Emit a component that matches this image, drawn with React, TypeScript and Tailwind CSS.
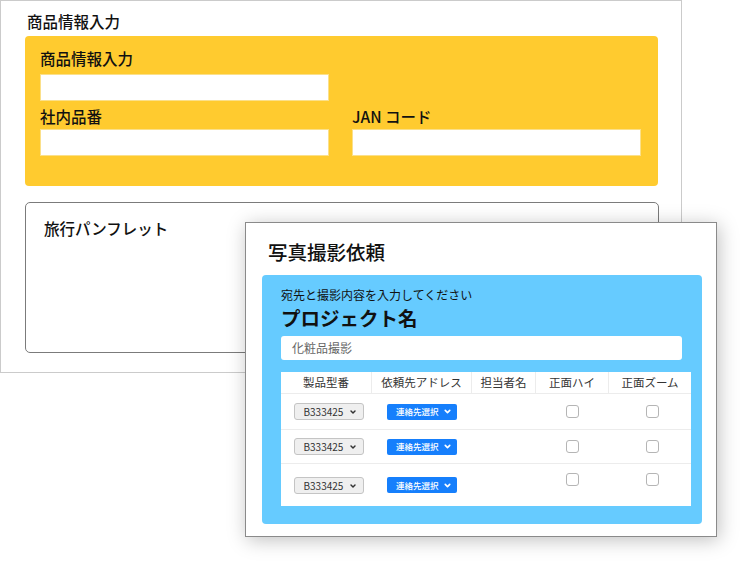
import React from "react";

const Chevron = ({ className }: { className?: string }) => (
  <svg viewBox="0 0 10 10" className={className} fill="none" stroke="currentColor" strokeWidth="1.8" strokeLinecap="round" strokeLinejoin="round">
    <path d="M2.5 3.8 L5 6.3 L7.5 3.8" />
  </svg>
);

const Select = () => (
  <div className="flex items-center justify-between w-[70px] h-[17px] rounded-[3px] border border-[#c4c4c4] bg-[#efefef] pl-[9px] pr-[6px] text-[10px] leading-none text-[#333]">
    <span>B333425</span>
    <Chevron className="w-[8px] h-[8px] text-[#333]" />
  </div>
);

const BlueBtn = () => (
  <div className="flex items-center justify-between w-[70px] h-[16px] rounded-[2px] bg-[#167ffc] pl-[9px] pr-[5px] text-[8.5px] leading-none text-white font-medium">
    <span>連絡先選択</span>
    <Chevron className="w-[9px] h-[9px] text-white" />
  </div>
);

const Check = () => (
  <div className="w-[13px] h-[13px] rounded-[3px] border border-[#b5b5b5] bg-white" />
);

const cols = "grid grid-cols-[91px_100px_64px_73px_82px]";

const Row = ({ h, top }: { h: string; top?: boolean }) => (
  <div className={`${cols} ${h} border-b border-[#ececec] last:border-b-0`}>
    <div className={`flex justify-center ${top ? "items-start pt-[13px]" : "items-center"}`}>
      <div className="ml-[4px]"><Select /></div>
    </div>
    <div className={`flex justify-center ${top ? "items-start pt-[13px]" : "items-center"}`}>
      <BlueBtn />
    </div>
    <div />
    <div className={`flex justify-center ${top ? "items-start pt-[9px]" : "items-center"}`}>
      <Check />
    </div>
    <div className={`flex justify-center ${top ? "items-start pt-[9px]" : "items-center"}`}>
      <div className="ml-[5px]"><Check /></div>
    </div>
  </div>
);

export default function App() {
  return (
    <div
      className="relative w-[743px] h-[564px] bg-white overflow-hidden text-[#111]"
      style={{ fontFamily: '"Noto Sans CJK JP", "Noto Sans", sans-serif' }}
    >
      {/* back window */}
      <div className="w-[682px] h-[373px] border border-[#cbcbcb] bg-white pl-[24px] pt-[9px]">
        <div className="pl-[2px] text-[15.5px] leading-[22px] font-medium">商品情報入力</div>
        <div className="mt-[4px] w-[633px] h-[150px] rounded-[4px] bg-[#ffcb2f] pl-[15px] pt-[11px]">
          <div className="grid grid-cols-[289px_289px] gap-x-[23px]">
            <div className="text-[15.5px] leading-[22px] font-medium">商品情報入力</div>
            <div />
            <div className="mt-[5px] h-[27px] bg-white border border-[#fbe08a]" />
            <div />
            <div className="mt-[4px] text-[15.5px] leading-[22px] font-medium">社内品番</div>
            <div className="mt-[4px] text-[15.5px] leading-[22px] font-medium">JAN コード</div>
            <div className="mt-[2px] h-[27px] bg-white border border-[#fbe08a]" />
            <div className="mt-[2px] h-[27px] bg-white border border-[#fbe08a]" />
          </div>
        </div>
        <div className="mt-[16px] w-[634px] h-[151px] rounded-[5px] border border-[#7b7b7b] pl-[18px] pt-[14px]">
          <div className="text-[15.5px] leading-[22px] font-medium">旅行パンフレット</div>
        </div>
      </div>

      {/* front window */}
      <div className="absolute left-[245px] top-[222px] w-[472px] h-[315px] bg-white border border-[#8a8a8a] shadow-[2px_3px_18px_rgba(0,0,0,0.25)] pt-[15px]">
        <div className="pl-[22px] text-[19.5px] leading-[28px] font-medium">写真撮影依頼</div>
        <div className="mt-[9px] ml-[16px] w-[440px] h-[249px] rounded-[4px] bg-[#66cbff] pl-[19px] pt-[12px]">
          <div className="text-[12px] leading-[16px]">宛先と撮影内容を入力してください</div>
          <div className="mt-[2px] text-[19.5px] leading-[26px] font-bold">プロジェクト名</div>
          <div className="mt-[5px] w-[401px] h-[24px] rounded-[3px] bg-white pl-[11px] flex items-center text-[12px] text-[#666]">
            化粧品撮影
          </div>
          <div className="mt-[12px] w-[410px] h-[134px] bg-white">
            <div className={`${cols} h-[22px] border-b border-[#ececec] text-[11.5px] text-[#333]`}>
              <div className="flex items-center justify-center border-r border-[#ececec]">製品型番</div>
              <div className="flex items-center justify-center border-r border-[#ececec]">依頼先アドレス</div>
              <div className="flex items-center justify-center border-r border-[#ececec]">担当者名</div>
              <div className="flex items-center justify-center border-r border-[#ececec]">正面ハイ</div>
              <div className="flex items-center justify-center">正面ズーム</div>
            </div>
            <Row h="h-[36px]" />
            <Row h="h-[34px]" />
            <Row h="h-[42px]" top />
          </div>
        </div>
      </div>
    </div>
  );
}
